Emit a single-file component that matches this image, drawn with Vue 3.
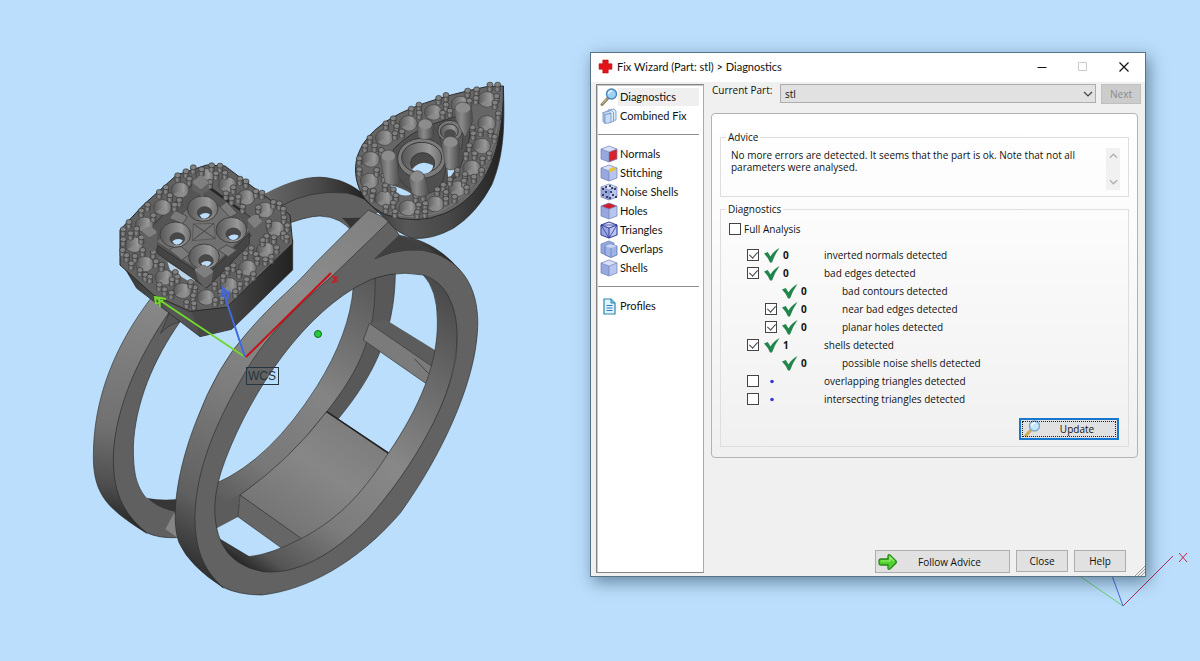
<script setup>
import { ref } from 'vue'

const navGroups = [
  [
    { id: 'diagnostics', label: 'Diagnostics' },
    { id: 'combined', label: 'Combined Fix' },
  ],
  [
    { id: 'normals', label: 'Normals' },
    { id: 'stitching', label: 'Stitching' },
    { id: 'noise', label: 'Noise Shells' },
    { id: 'holes', label: 'Holes' },
    { id: 'triangles', label: 'Triangles' },
    { id: 'overlaps', label: 'Overlaps' },
    { id: 'shells', label: 'Shells' },
  ],
  [{ id: 'profiles', label: 'Profiles' }],
]
const active = ref('diagnostics')
const fullAnalysis = ref(false)
const advice =
  'No more errors are detected. It seems that the part is ok. Note that not all parameters were analysed.'

const checks = ref([
  { id: 'inverted', label: 'inverted normals detected', box: true, on: true, count: '0' },
  { id: 'edges', label: 'bad edges detected', box: true, on: true, count: '0' },
  { id: 'contours', label: 'bad contours detected', sub: true, count: '0' },
  { id: 'near', label: 'near bad edges detected', sub: true, box: true, on: true, count: '0' },
  { id: 'planar', label: 'planar holes detected', sub: true, box: true, on: true, count: '0' },
  { id: 'shellcount', label: 'shells detected', box: true, on: true, count: '1' },
  { id: 'noiseshells', label: 'possible noise shells detected', sub: true, count: '0' },
  { id: 'overlapping', label: 'overlapping triangles detected', box: true, on: false },
  { id: 'intersecting', label: 'intersecting triangles detected', box: true, on: false },
])

const pearSeats = [
  [440, 88], [360, 102], [280, 127], [205, 160], [133, 203], [92, 268], [88, 333],
  [132, 386], [203, 414], [285, 402], [352, 356], [395, 294], [425, 228], [440, 160],
]
const pearBeads = [
  [450, 44], [473, 44], [410, 58], [383, 62], [318, 75], [296, 84], [237, 104], [214, 116],
  [408, 84], [388, 92], [470, 78], [318, 104], [465, 98], [238, 128], [308, 128], [330, 122], [160, 145], [138, 160], [170, 168],
  [398, 172], [422, 180], [452, 184], [475, 130], [186, 184], [165, 190], [90, 203], [75, 227], [104, 226],
  [464, 200], [400, 190], [388, 226], [378, 252], [58, 265], [124, 240], [448, 250], [404, 250], [110, 300],
  [58, 298], [428, 265], [352, 300], [375, 312], [402, 320], [132, 316], [330, 328], [425, 300], [75, 356], [100, 362],
  [136, 346], [372, 332], [310, 344], [292, 358], [160, 358], [96, 378], [380, 352], [318, 366], [168, 376],
  [228, 378], [250, 374], [138, 410], [344, 380], [160, 398], [256, 400], [318, 386], [236, 404], [232, 426], [255, 424], [165, 424],
]
const squareSeats = [
  [285, 78], [210, 120], [157, 172], [103, 224], [72, 284], [104, 342], [162, 382], [217, 422],
  [288, 442], [357, 406], [412, 354], [466, 300], [496, 236], [464, 180], [408, 142], [352, 104],
]
const squareBeads = [
  [305, 46], [330, 47], [250, 52], [228, 64], [275, 58], [203, 76], [318, 70], [345, 68], [238, 86], [390, 86],
  [408, 94], [300, 96], [168, 112], [148, 126], [180, 136], [370, 112], [438, 124], [456, 128], [348, 130], [208, 150], [113, 164],
  [94, 182], [385, 140], [365, 145], [130, 196], [194, 164], [490, 156], [508, 160], [398, 170], [520, 176],
  [57, 216], [40, 238], [445, 172], [80, 236], [440, 200], [522, 202], [532, 226], [62, 250], [520, 250], [476, 214], [94, 262],
  [40, 268], [470, 258], [492, 262], [530, 260], [458, 270], [38, 300], [98, 300], [424, 294], [50, 316], [75, 318],
  [130, 306], [438, 312], [500, 292], [406, 310], [484, 320], [64, 340], [138, 334], [155, 344], [442, 326], [370, 346],
  [352, 356], [90, 360], [106, 374], [466, 328], [196, 366], [186, 388], [120, 380], [430, 372], [388, 366], [202, 380],
  [410, 388], [340, 378], [148, 404], [164, 418], [255, 412], [242, 396], [314, 402], [390, 402], [184, 428], [332, 424],
  [376, 424], [250, 436], [230, 456], [316, 450], [252, 460], [336, 444],
]
const squareCups = [[278, 176], [196, 254], [364, 240], [282, 320]]
</script>

<template>
  <main class="desktop">
    <svg class="scene" viewBox="0 0 1200 661" preserveAspectRatio="xMinYMin slice" role="img" aria-label="Ring model">
      <defs>
        <linearGradient id="band" gradientUnits="userSpaceOnUse" x1="880" y1="170" x2="320" y2="1200">
          <stop offset="0" stop-color="#808080" /><stop offset=".25" stop-color="#8c8c8c" />
          <stop offset=".55" stop-color="#7e7e7e" /><stop offset=".85" stop-color="#606060" />
          <stop offset="1" stop-color="#333" />
        </linearGradient>
        <linearGradient id="bandBack" gradientUnits="userSpaceOnUse" x1="230" y1="420" x2="130" y2="1080">
          <stop offset="0" stop-color="#888" /><stop offset=".6" stop-color="#707070" />
          <stop offset=".85" stop-color="#4f4f4f" /><stop offset="1" stop-color="#2c2c2c" />
        </linearGradient>
        <linearGradient id="topStrip" x1="0" x2="1" y1="0" y2="0">
          <stop offset="0" stop-color="#6c6c6c" /><stop offset=".55" stop-color="#4b4b4b" />
          <stop offset="1" stop-color="#202020" />
        </linearGradient>
        <linearGradient id="inner" gradientUnits="userSpaceOnUse" x1="1060" y1="380" x2="480" y2="1220">
          <stop offset="0" stop-color="#4c4c4c" /><stop offset=".2" stop-color="#666" />
          <stop offset=".5" stop-color="#888" /><stop offset=".75" stop-color="#7c7c7c" />
          <stop offset=".93" stop-color="#555" /><stop offset="1" stop-color="#222" />
        </linearGradient>
        <linearGradient id="innerBack" gradientUnits="userSpaceOnUse" x1="860" y1="360" x2="420" y2="1020">
          <stop offset="0" stop-color="#5a5a5a" /><stop offset=".45" stop-color="#848484" />
          <stop offset=".8" stop-color="#787878" /><stop offset="1" stop-color="#5c5c5c" />
        </linearGradient>
        <linearGradient id="plate" x1="1" x2=".2" y1="0" y2="1">
          <stop offset="0" stop-color="#777" /><stop offset=".5" stop-color="#878787" />
          <stop offset="1" stop-color="#707070" />
        </linearGradient>
        <linearGradient id="seat" x1="0" x2="1" y1="0" y2="0">
          <stop offset="0" stop-color="#575757" /><stop offset=".4" stop-color="#7c7c7c" />
          <stop offset=".7" stop-color="#999" /><stop offset="1" stop-color="#6e6e6e" />
        </linearGradient>
        <linearGradient id="peg" x1="0" x2="1" y1="0" y2="0">
          <stop offset="0" stop-color="#606060" /><stop offset=".4" stop-color="#8a8a8a" />
          <stop offset="1" stop-color="#4a4a4a" />
        </linearGradient>
        <linearGradient id="skirt" x1="0" x2="1" y1="0" y2="0">
          <stop offset="0" stop-color="#333" /><stop offset=".3" stop-color="#575757" />
          <stop offset=".6" stop-color="#484848" /><stop offset="1" stop-color="#222" />
        </linearGradient>
        <g id="bead">
          <path d="M-8 2V18Q0 24 8 18V2Z" fill="url(#peg)" stroke="#3a3a3a" stroke-width="1.500" />
          <ellipse rx="9" ry="7.500" fill="#818181" stroke="#2f2f2f" stroke-width="2" />
        </g>
        <g id="cup">
          <ellipse rx="27" ry="23" fill="url(#seat)" stroke="#404040" stroke-width="2" />
          <path d="M-20 13L0 2L22 11Q5 32-20 13Z" fill="#8c8c8c" opacity=".7" />
        </g>
      </defs>

      <!-- ring bands -->
      <g transform="translate(80 160) scale(.33333)" stroke-linejoin="round">
        <path d="M530 115Q640 50 720 50Q800 53 860 110L850 135Q750 70 605 138L530 180Z" fill="url(#topStrip)" />
        <path d="M560 165L605 137Q690 88 800 99Q850 108 900 150L820 220Q785 170 720 168Q680 168 600 200Z" fill="#606060" stroke="#2a2a2a" stroke-width="2" />
        <path d="M785 173Q820 176 855 172L818 215Q806 190 785 173Z" fill="#343434" />
        <path d="M220 405C100 560 40 720 40 890C40 1010 90 1050 200 1120L200 1080C125 1020 112 960 115 870Q150 650 270 455Z" fill="url(#bandBack)" stroke="#333" stroke-width="2" />
        <path d="M272 450C160 610 100 770 100 900C100 1010 140 1070 200 1118Q235 1135 290 1133L300 1050Q225 1045 195 1010C165 970 160 930 160 860C165 730 220 600 300 485Z" fill="#606060" stroke="#2a2a2a" stroke-width="2" />
        <path d="M272 450L300 485Q262 495 242 520Z" fill="#555" stroke="#333" stroke-width="2" />
        <path d="M200 1014Q240 1022 290 1018V1057Q235 1045 200 1014Z" fill="#363636" />
        <path d="M282 1060L256 1108L295 1135L310 1080Z" fill="#858585" />

        <path d="M885 352L946 340C944 520 880 650 775 776L735 760Q880 580 885 352Z" fill="#585858" stroke="#2d2d2d" stroke-width="2" />
        <path d="M820 380L885 352C890 520 840 630 740 755Q610 925 480 1005Q430 1038 400 1045L408 970Q570 900 710 680Q810 520 820 380Z" fill="url(#innerBack)" stroke="#333" stroke-width="2" />
        <path d="M915 478L1080 580L1055 640L868 490Z" fill="#5c5c5c" />
        <path d="M868 490L1060 622L1040 672L850 540Z" fill="#7b7b7b" stroke="#333" stroke-width="2" />
        <path d="M1004 597L1046 641" stroke="#444" stroke-width="3" />
        <path d="M740 755L935 884Q840 1080 665 1140L480 1005Q630 900 740 755Z" fill="url(#plate)" stroke="#333" stroke-width="2" />
        <path d="M740 755L935 886" stroke="#222" stroke-width="5" />
        <path d="M400 1045L480 1005L475 1070L400 1110Z" fill="#5c5c5c" />
        <path d="M480 1005L668 1138L610 1168L474 1070Z" fill="#666" stroke="#333" stroke-width="2" />
        <path d="M410 1130L510 1190L600 1200L560 1245L450 1215Z" fill="#383838" />

        <path d="M1030 345Q1150 390 1130 560C1115 720 1010 930 880 1100Q600 1340 440 1220L408 1135Q440 1180 505 1190Q570 1185 665 1135C790 1070 860 980 925 880C1020 740 1075 610 1072 480Q1072 390 1030 345Z" fill="url(#inner)" stroke="#333" stroke-width="2" />

        <path d="M930 180L955 224Q1065 240 1140 330L1060 310L885 300L780 350Z" fill="url(#topStrip)" />
        <path fill-rule="evenodd" d="M930 180L958 226L885 296Q985 250 1065 280C1170 320 1205 420 1190 540C1175 680 1090 880 960 1060C830 1210 680 1290 545 1305Q475 1305 425 1280C350 1210 330 1130 345 990C370 850 440 680 520 545Q580 460 700 360ZM1030 345Q920 325 830 380C640 490 490 740 425 930C400 1010 395 1080 425 1150Q460 1220 550 1235C650 1245 760 1185 865 1075C1010 910 1110 720 1128 590C1145 450 1100 365 1030 345Z" fill="#626262" stroke="#2a2a2a" stroke-width="2" />
        <path d="M958 226L885 296Q960 262 1065 275Q1010 245 958 226Z" fill="#404040" />
        <path d="M865 150L930 181L760 345C640 450 570 520 515 605C420 760 345 920 345 1075C345 1180 380 1240 430 1283Q330 1220 298 1150C270 1080 290 930 350 780Q410 620 500 520C590 415 630 395 700 315Z" fill="url(#band)" stroke="#2d2d2d" stroke-width="2" />
      </g>

      <!-- square head -->
      <g transform="translate(110 150) scale(.33333)" stroke-linejoin="round">
        <path d="M30 330L80 415L270 560L365 538L548 360V270L350 450L240 470Z" fill="url(#skirt)" stroke="#222" stroke-width="2" />
        <path d="M240 470L350 460L365 538L270 560Z" fill="#464646" />
        <path d="M30 240L100 165L200 75L290 45L345 48L540 195L548 280L350 472L240 484L130 435L30 345Z" fill="#616161" stroke="#272727" stroke-width="3" />
        <path d="M130 285L285 395L430 250L420 200L300 110L270 80L125 230Z" fill="#555" stroke="#333" stroke-width="3" />
        <path d="M172 335L255 388L250 402L180 360Z" fill="#b9d4e8" />
        <path d="M140 285L285 380L418 250V282L290 415L142 310Z" fill="#454545" stroke="#252525" stroke-width="2" />
        <path d="M140 275L275 130L420 240L285 375Z" fill="#707070" stroke="#444" stroke-width="2" />
        <path d="M178 205L195 180L232 200L218 222ZM330 170L350 155L382 190L360 202ZM178 300L205 282L240 312L215 330ZM325 300L350 285L380 300L355 320Z" fill="#7a7a7a" stroke="#4c4c4c" stroke-width="3" />
        <path d="M300 115L405 190" stroke="#252525" stroke-width="6" />
        <g v-for="c in squareCups" :key="c.join()" :transform="`translate(${c[0]} ${c[1]})`">
          <ellipse rx="46" ry="38" fill="url(#seat)" stroke="#404040" stroke-width="3" />
          <ellipse cx="6" cy="12" rx="22" ry="18" fill="#484848" stroke="#383838" stroke-width="2" />
          <path d="M-9 20Q6 8 22 17Q17 30 4 30Q-5 29-9 20Z" fill="#badefb" />
        </g>
        <path d="M250 222L312 220L316 266L247 272Z" fill="#747474" stroke="#5a5a5a" stroke-width="3" />
        <path d="M250 222L316 266M312 220L247 272" stroke="#464646" stroke-width="3" />
        <use v-for="s in squareSeats" :key="s.join()" href="#cup" :transform="`translate(${s[0]} ${s[1]})`" />
        <use v-for="b in squareBeads" :key="b.join()" href="#bead" :transform="`translate(${b[0]} ${b[1]})`" />
        <g fill="#616161" stroke="#616161" stroke-width="10">
          <path d="M252 95L270 84L292 96V118L275 128L252 118ZM101 243L120 235L136 248V290L127 300L112 280ZM420 210L434 202L450 217L445 245L430 254L418 232ZM260 358L282 350L304 366L300 396L286 408L268 388Z" />
          <g fill="#7f7f7f" stroke="#7f7f7f">
            <path d="M254 97L272 82L290 98L272 112ZM102 242L120 233L134 246L118 256ZM418 210L434 199L450 214L434 228ZM260 360L282 349L304 364L284 378Z" />
          </g>
        </g>
      </g>

      <!-- pear head -->
      <g transform="translate(340 70) scale(.33333)" stroke-linejoin="round">
        <path d="M490 48C495 180 490 260 455 345Q410 430 340 475Q275 510 220 505Q170 490 145 455L70 385L300 350Z" fill="url(#skirt)" stroke="#222" stroke-width="2" />
        <path d="M490 48L440 50Q220 95 130 160Q35 230 48 320Q60 400 140 435Q230 465 310 432C410 390 455 300 475 210Q492 130 490 48Z" fill="#666" stroke="#272727" stroke-width="3" />
        <path d="M480 120Q465 230 430 295Q380 385 300 425Q220 455 140 425" fill="none" stroke="#7c7c7c" stroke-width="3" />
        <path d="M160 238Q210 185 285 160L345 140L395 150L385 225L350 320Q270 385 195 370L148 345Z" fill="#515151" stroke="#333" stroke-width="3" />
        <path d="M150 345Q185 352 215 372Q195 382 172 370ZM322 290L345 300L325 330Z" fill="#badefb" />
        <path d="M175 280V320Q205 375 265 370Q315 360 320 270Z" fill="#505050" stroke="#303030" stroke-width="2" />
        <path d="M297 190Q300 225 325 250L365 235L370 180Z" fill="#5c5c5c" stroke="#333" stroke-width="2" />
        <ellipse cx="245" cy="265" rx="72" ry="60" fill="#7a7a7a" stroke="#383838" stroke-width="3" />
        <ellipse cx="245" cy="263" rx="60" ry="46" fill="url(#seat)" stroke="#383838" stroke-width="3" />
        <ellipse cx="248" cy="280" rx="36" ry="32" fill="#4a4a4a" stroke="#383838" stroke-width="3" />
        <path d="M216 298Q242 266 279 286Q280 302 262 310Q238 318 216 298Z" fill="#badefb" />
        <ellipse cx="330" cy="183" rx="37" ry="32" fill="#787878" stroke="#383838" stroke-width="3" />
        <ellipse cx="328" cy="184" rx="27" ry="22" fill="url(#seat)" stroke="#383838" stroke-width="3" />
        <ellipse cx="330" cy="192" rx="18" ry="14" fill="#4c4c4c" />
        <use v-for="s in pearSeats" :key="s.join()" href="#cup" :transform="`translate(${s[0]} ${s[1]})`" />
        <use v-for="b in pearBeads" :key="b.join()" href="#bead" :transform="`translate(${b[0]} ${b[1]})`" />
        <g fill="url(#peg)" stroke="#484848" stroke-width="2">
          <path d="M120 265Q122 240 146 240Q170 242 170 265L180 335Q165 355 135 338Z" />
          <path d="M232 170Q235 147 256 146Q278 148 281 170V200Q255 216 234 202Z" />
          <path d="M342 122Q346 97 368 96Q393 98 396 122L398 155L375 202L348 150Z" />
          <path d="M305 225Q308 200 332 199Q357 202 359 225L356 285Q338 308 318 295Z" />
          <path d="M206 328Q210 304 232 302Q254 305 256 328L268 370Q240 390 216 370Z" />
        </g>
        <g fill="#8c8c8c">
          <ellipse cx="145" cy="258" rx="20" ry="15" /><ellipse cx="256" cy="163" rx="20" ry="14" />
          <ellipse cx="369" cy="114" rx="22" ry="15" /><ellipse cx="332" cy="217" rx="21" ry="15" />
          <ellipse cx="231" cy="320" rx="20" ry="15" />
        </g>
      </g>

      <!-- work coordinate system -->
      <g fill="none" stroke-width="2">
        <path d="M245 357L155 297M156 304L155 297L166 299M157 304L163 300M159 300L160 307" stroke="#72d72f" />
        <path d="M245 357L223 291M222 297L223 288L228 293M222 294L229 292L227 300" stroke="#4168dc" />
        <path d="M246 357L331 273" stroke="#c41217" />
        <path d="M332 276L338 282M338 276L332 283M335 276V283" stroke="#c42126" stroke-width="1.500" />
      </g>
      <circle cx="318" cy="334" r="3.500" fill="#22cf38" stroke="#126b22" />
      <rect x="246.500" y="367.500" width="32" height="17" fill="none" stroke="#26343f" />
      <text class="wcs" x="248" y="380">WCS</text>

      <!-- view axes -->
      <g fill="none">
        <path d="M1123 606L1081 577" stroke="#6ed06e" />
        <path d="M1123 606L1110 570" stroke="#4269d9" />
        <path d="M1123 606L1173 556" stroke="#a72b5b" />
        <path d="M1179 553L1187 562M1187 553L1179 562" stroke="#cb2447" />
      </g>
    </svg>

    <section class="window" role="dialog" aria-labelledby="title">
      <header class="titlebar">
        <svg class="cross" viewBox="0 0 14 14" aria-hidden="true">
          <path d="M4.500 1h5v3.500H13v5H9.500V13h-5V9.500H1v-5h3.500Z" fill="#e2141a" stroke="#b40d12" stroke-width=".6" />
        </svg>
        <h1 id="title">Fix Wizard (Part: stl) &gt; Diagnostics</h1>
        <button class="caption" aria-label="Minimize"><svg viewBox="0 0 12 12"><path d="M1.500 6.500h9" stroke="#111" /></svg></button>
        <button class="caption" aria-label="Maximize" disabled><svg viewBox="0 0 12 12"><path d="M1.500 1.500h8v8h-8Z" fill="none" stroke="#ccc" /></svg></button>
        <button class="caption" aria-label="Close window"><svg viewBox="0 0 12 12"><path d="M1.500 1.500l9 9M10.500 1.500l-9 9" stroke="#111" stroke-width="1.200" /></svg></button>
      </header>

      <div class="body">
        <nav class="side" aria-label="Pages">
          <ul v-for="(group, g) in navGroups" :key="g">
            <li v-for="item in group" :key="item.id">
              <button class="nav" :class="{ active: active === item.id }" @click="active = item.id">
                <svg viewBox="0 0 18 18" aria-hidden="true">
                  <template v-if="item.id === 'diagnostics'">
                    <path d="M2 16.500L8 10" stroke="#8c8567" stroke-width="3" stroke-linecap="round" />
                    <path d="M2 15.800L7 10.500" stroke="#d6cf9c" stroke-width="1" />
                    <circle cx="11.500" cy="6" r="5" fill="#9cd2f4" stroke="#4b83b5" stroke-width="1.400" />
                    <path d="M8.500 6q.5-3 3.500-3" stroke="#e8f7ff" stroke-width="1.500" fill="none" />
                  </template>
                  <template v-else-if="item.id === 'combined'">
                    <g fill="#dce9f8" stroke="#7b9bcb" stroke-width=".9" stroke-linejoin="round">
                      <path d="M8 3l6-1 2 2v9l-6 1-2-2Z" /><path d="M5.500 4.500l6-1 2 2v9l-6 1-2-2Z" />
                      <path d="M3 5.500l2 2v9l-2-2Z" fill="#b4cbeb" /><path d="M3 5.500l6-1 2 2-6 1Z" /><path d="M5 7.500l6-1v9l-6 1Z" fill="#c8dcf5" />
                    </g>
                  </template>
                  <template v-else-if="item.id === 'profiles'">
                    <path d="M4 2h7l4 4v11H4Z" fill="#dff4ff" stroke="#2c85ac" stroke-width="1.200" />
                    <path d="M11 2v4h4" fill="#78c7e8" stroke="#2c85ac" />
                    <path d="M6.500 8.500h6M6.500 11h6M6.500 13.500h6" stroke="#3179bb" stroke-width="1.200" />
                  </template>
                  <template v-else-if="item.id === 'overlaps'">
                    <path d="M1 4l8-3 5 2v10l-5 3-8-3Z" fill="#94a8de" stroke="#6f84bd" stroke-width=".8" />
                    <path d="M5 6l5-2 7 2v9l-6 2.500-6-2.500Z" fill="#9fb4e6" stroke="#5c72b0" stroke-width=".8" />
                    <path d="M5 6l6 2 6-2-7-2Z" fill="#cbd8f6" /><path d="M11 8v9" stroke="#6b80bd" stroke-width=".8" />
                  </template>
                  <template v-else>
                    <path d="M1 4l8 3v10l-8-3Z" fill="#98a8de" />
                    <path d="M9 7l8-3v10l-8 3Z" :fill="item.id === 'normals' ? '#d9232b' : '#b9c5ef'" />
                    <path d="M1 4l8-3 8 3-8 3Z" :fill="item.id === 'holes' ? '#cf1d2b' : '#d7e0f8'" />
                    <path d="M1 4l8-3 8 3v10l-8 3-8-3ZM1 4l8 3 8-3M9 7v10" fill="none" stroke="#6f7fb8" stroke-width=".7" />
                    <path v-if="item.id === 'stitching'" d="M9 8l7-3.500M9 6l5-2.500" stroke="#e6c72d" stroke-width="1.600" />
                    <path v-if="item.id === 'triangles'" d="M1 4l8 13 8-13ZM1 4l8 3 8-3M9 7v10M1 4v10l8 3 8-3V4L9 1Z" fill="none" stroke="#32379b" stroke-width=".8" />
                    <g v-if="item.id === 'noise'" fill="#171b35">
                      <circle v-for="p in [[3, 6], [6, 9], [3, 12], [7, 14], [11, 9], [15, 6], [13, 12], [6, 4], [10, 3], [12, 5], [10, 15], [16, 14]]" :key="p.join()" :cx="p[0]" :cy="p[1]" r="1" />
                    </g>
                  </template>
                </svg>
                <span>{{ item.label }}</span>
              </button>
            </li>
          </ul>
        </nav>

        <div class="content">
          <div class="partrow">
            <label for="part">Current Part:</label>
            <div class="selectwrap">
              <select id="part"><option>stl</option></select>
              <svg viewBox="0 0 10 6" aria-hidden="true"><path d="M1 1l4 4 4-4" fill="none" stroke="#444" stroke-width="1.200" /></svg>
            </div>
            <button class="btn next" disabled>Next</button>
          </div>

          <div class="panel">
            <fieldset class="advice">
              <legend>Advice</legend>
              <textarea readonly aria-label="Advice" :value="advice"></textarea>
              <div class="scroll" aria-hidden="true">
                <svg viewBox="0 0 10 6"><path d="M1 5l4-4 4 4" /></svg>
                <svg viewBox="0 0 10 6"><path d="M1 1l4 4 4-4" /></svg>
              </div>
            </fieldset>

            <fieldset class="diag">
              <legend>Diagnostics</legend>
              <label class="full"><input v-model="fullAnalysis" type="checkbox" />Full Analysis</label>
              <ul class="checks">
                <li v-for="c in checks" :key="c.id" :class="{ sub: c.sub }">
                  <input v-if="c.box" :id="c.id" v-model="c.on" type="checkbox" />
                  <span v-else></span>
                  <svg v-if="c.count" class="tick" viewBox="0 0 16 16" aria-hidden="true">
                    <path d="M0 6.500L3.800 5L6.500 9.500Q9.500 4 15.500 1Q10.500 8 8 15.500H6Q4.500 11 0 6.500Z" fill="#21864d" />
                  </svg>
                  <svg v-else class="tick" viewBox="0 0 16 16" aria-hidden="true"><circle cx="8" cy="8.500" r="1.800" fill="#3b36d8" /></svg>
                  <b>{{ c.count }}</b>
                  <label :for="c.box ? c.id : undefined">{{ c.label }}</label>
                </li>
              </ul>
              <button class="btn update">
                <svg viewBox="0 0 18 18" aria-hidden="true">
                  <path d="M2 16.500L8 10" stroke="#d2a951" stroke-width="3" />
                  <circle cx="11.500" cy="6" r="5" fill="#c5e6fb" stroke="#7da6cc" stroke-width="1.400" />
                  <path d="M8.500 6q.5-3 3.500-3" stroke="#fff" stroke-width="1.500" fill="none" />
                </svg>
                <span>Update</span>
              </button>
            </fieldset>
          </div>

          <footer class="actions">
            <button class="btn follow">
              <svg viewBox="0 0 20 18" aria-hidden="true">
                <path d="M3 6h7V3q0-2 2-1l6 6q1 1 0 2l-6 6q-2 1-2-1v-3H3q-2 0-2-2V8q0-2 2-2Z" fill="#53d12d" stroke="#27851b" stroke-width="1.300" />
                <path d="M3 8h9V4l4 4" fill="none" stroke="#a1f27c" stroke-width="1.200" />
              </svg>
              <span>Follow Advice</span>
            </button>
            <button class="btn small">Close</button>
            <button class="btn small">Help</button>
          </footer>
        </div>
      </div>
      <svg class="grip" viewBox="0 0 10 10" aria-hidden="true"><path d="M0 10L10 0M3 10l7-7M6 10l4-4" stroke="#999" /></svg>
    </section>
  </main>
</template>

<style>
body {
  margin: 0;
}
</style>

<style scoped>
* {
  box-sizing: border-box;
}
.desktop {
  position: relative;
  min-height: 100vh;
  overflow: hidden;
  background: #badefb;
  color: #111;
  font: 10px/14px "Open Sans", "Noto Sans", sans-serif;
}
.scene {
  position: absolute;
  inset: 0;
  width: 100%;
  height: 100%;
}
.wcs {
  font: 12px "Liberation Sans", sans-serif;
  fill: #26343f;
}
.window {
  position: absolute;
  top: 52px;
  left: 590px;
  right: 54px;
  min-width: 480px;
  border: 1px solid #577386;
  background: #f0f0f0;
  box-shadow: 3px 5px 15px rgba(20, 45, 70, 0.5);
}
button,
input,
select,
textarea {
  margin: 0;
  font: inherit;
  color: inherit;
}
ul {
  margin: 0;
  padding: 0;
  list-style: none;
}
.titlebar {
  display: flex;
  align-items: center;
  height: 29px;
  padding: 0 1px 2px 7px;
  background: #fff;
}
.cross {
  width: 15px;
  height: 15px;
}
h1 {
  flex: 1;
  margin: 0 0 0 4px;
  font: 11px/16px Lato, "Open Sans", sans-serif;
}
.caption {
  display: grid;
  place-items: center;
  width: 41px;
  height: 27px;
  padding: 0;
  border: 0;
  background: none;
}
.caption svg {
  width: 12px;
  height: 12px;
}
.body {
  display: flex;
  gap: 7px;
  padding: 2px 4px 3px 5px;
}
.side {
  flex: none;
  width: 108px;
  padding: 2px 4px 0 1px;
  border: 1px solid #858585;
  border-right-color: #aaa;
  background: #fff;
  box-shadow: inset 1px 1px #c9c9c9;
}
.side ul + ul {
  margin-top: 9px;
  padding-top: 9px;
  border-top: 1px solid #8f8f8f;
}
.nav {
  display: flex;
  align-items: center;
  width: 100%;
  height: 19px;
  padding: 0 0 0 2px;
  border: 0;
  background: none;
  font: 11px/18px Lato, "Open Sans", sans-serif;
  text-align: left;
  white-space: nowrap;
}
.nav svg {
  flex: none;
  width: 18px;
  height: 18px;
}
.nav span {
  flex: 1;
  padding-left: 2px;
}
.nav.active span {
  background: #efefef;
}
.content {
  flex: 1;
  display: flex;
  flex-direction: column;
  min-width: 0;
}
.partrow {
  display: flex;
  align-items: flex-start;
  height: 29px;
}
.partrow label {
  width: 69px;
  padding-left: 1px;
  line-height: 12px;
  white-space: nowrap;
}
.selectwrap {
  position: relative;
  flex: 1;
  margin-right: 5px;
}
select {
  display: block;
  appearance: none;
  width: 100%;
  height: 19px;
  padding: 0 20px 0 4px;
  border: 1px solid #adadad;
  border-radius: 0;
  background: #e1e1e1;
}
.selectwrap svg {
  position: absolute;
  top: 7px;
  right: 3px;
  width: 10px;
  height: 6px;
}
.btn {
  display: flex;
  align-items: center;
  justify-content: center;
  padding: 0;
  border: 1px solid #adadad;
  background: #e1e1e1;
}
.next {
  width: 40px;
  height: 20px;
  border-color: #bfbfbf;
  background: #ccc;
  color: #8a8a8a;
}
.panel {
  display: flex;
  flex-direction: column;
  gap: 5px;
  margin-right: 3px;
  padding: 16px 8px 10px;
  border: 1px solid #b3b3b3;
  border-radius: 4px;
  background: linear-gradient(#fff, #fbfbfb 35%, #f0f0f0);
}
fieldset {
  min-width: 0;
  margin: 0;
  border: 1px solid #dedede;
}
legend {
  padding: 0 2px;
  line-height: 14px;
}
.advice {
  display: flex;
  height: 67px;
  padding: 4px 8px 7px 10px;
}
.advice legend {
  margin-left: -5px;
}
textarea {
  flex: 1;
  height: 42px;
  padding: 1px 0 0;
  border: 0;
  outline: 0;
  background: none;
  resize: none;
  overflow: hidden;
  line-height: 12px;
}
.scroll {
  display: flex;
  flex-direction: column;
  justify-content: space-between;
  align-items: center;
  width: 14px;
  height: 42px;
  padding: 5px 0;
  background: #f1f1f1;
}
.scroll svg {
  width: 9px;
  height: 6px;
  fill: none;
  stroke: #b2b2b2;
  stroke-width: 1.6px;
}
.diag {
  padding: 4px 9px 6px 5px;
}
.full {
  display: flex;
  align-items: center;
  gap: 3px;
  height: 17px;
  padding-left: 3px;
}
input[type="checkbox"] {
  appearance: none;
  position: relative;
  flex: none;
  width: 12px;
  height: 12px;
  border: 1px solid #444;
  background: #fff;
}
input[type="checkbox"]:checked::after {
  content: "";
  position: absolute;
  top: 0;
  left: 3px;
  width: 4px;
  height: 7px;
  border: solid #444;
  border-width: 0 1px 1px 0;
  transform: rotate(42deg);
}
.checks {
  margin-top: 9px;
  padding-left: 21px;
}
.checks li {
  display: grid;
  grid-template-columns: 17px 19px 41px 1fr;
  align-items: center;
  height: 18px;
}
.checks li.sub {
  padding-left: 18px;
}
.tick {
  width: 16px;
  height: 16px;
}
.update {
  width: 100px;
  height: 22px;
  margin: 10px 0 0 auto;
  border: 2px solid #1878cf;
  outline: 1px dotted #222;
  outline-offset: -4px;
}
.update svg {
  width: 18px;
  height: 18px;
  margin-left: 2px;
}
.update span,
.follow span {
  flex: 1;
  text-align: center;
}
.update span {
  padding-right: 8px;
  padding-left: 4px;
}
.actions {
  display: flex;
  justify-content: flex-end;
  gap: 6px;
  margin-top: 92px;
  padding-right: 15px;
}
.follow {
  width: 135px;
  height: 23px;
}
.follow svg {
  width: 20px;
  height: 18px;
  margin-left: 2px;
}
.follow span {
  padding-right: 8px;
}
.small {
  width: 52px;
  height: 22px;
}
.grip {
  position: absolute;
  right: 0;
  bottom: 0;
  width: 10px;
  height: 10px;
}
</style>
